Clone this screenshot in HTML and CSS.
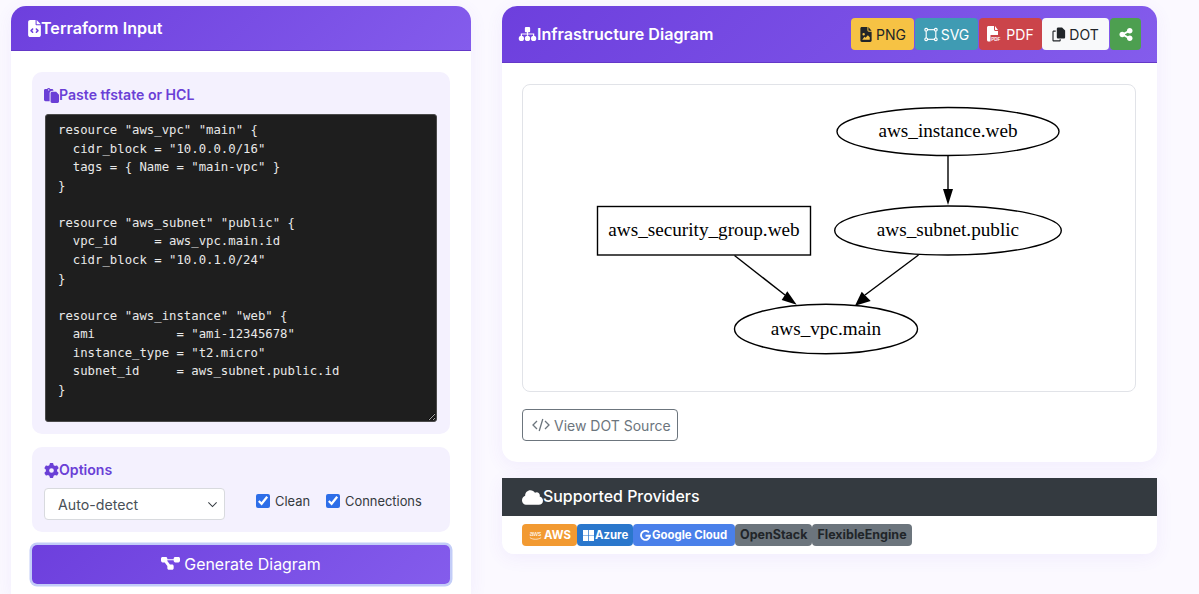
FILE: index.html
```html
<!DOCTYPE html>
<html lang="en">
<head>
<meta charset="utf-8">
<title>Terraform Diagram</title>
<link rel="stylesheet" href="styles.css">
</head>
<body>
<main class="layout">
  <section class="card input-card">
    <header class="card-head input-head">
      <svg class="ico ico-head" viewBox="0 0 384 512"><path d="M64 0C28.7 0 0 28.7 0 64V448c0 35.3 28.7 64 64 64H320c35.3 0 64-28.7 64-64V160H256c-17.7 0-32-14.3-32-32V0H64zM256 0V128H384L256 0zM153 289l-31 31 31 31c9.4 9.4 9.4 24.6 0 33.9s-24.6 9.4-33.9 0L71 337c-9.4-9.4-9.4-24.6 0-33.9l48-48c9.4-9.4 24.6-9.4 33.9 0s9.4 24.6 0 33.9zM265 255l48 48c9.4 9.4 9.4 24.6 0 33.9l-48 48c-9.4 9.4-24.6 9.4-33.9 0s-9.4-24.6 0-33.9l31-31-31-31c-9.4-9.4-9.4-24.6 0-33.9s24.6-9.4 33.9 0z"/></svg>
      <h2 class="card-title">Terraform Input</h2>
    </header>
    <div class="input-body">
      <div class="panel paste-panel">
        <label class="panel-label" for="src">
          <svg class="ico" viewBox="0 0 512 512"><path d="M160 0c-23.7 0-44.4 12.9-55.4 32H48C21.5 32 0 53.5 0 80V400c0 26.5 21.5 48 48 48H192V176c0-44.2 35.8-80 80-80h48V80c0-26.5-21.5-48-48-48H215.4C204.4 12.9 183.7 0 160 0zM272 128c-26.5 0-48 21.5-48 48V448v16c0 26.5 21.5 48 48 48H464c26.5 0 48-21.5 48-48V243.9c0-12.7-5.1-24.9-14.1-33.9l-66-66c-9-9-21.2-14.1-33.9-14.1H272zM160 40a24 24 0 1 1 0 48 24 24 0 1 1 0-48z"/></svg>
          Paste tfstate or HCL
        </label>
        <textarea id="src" class="code" spellcheck="false">resource "aws_vpc" "main" {
  cidr_block = "10.0.0.0/16"
  tags = { Name = "main-vpc" }
}

resource "aws_subnet" "public" {
  vpc_id     = aws_vpc.main.id
  cidr_block = "10.0.1.0/24"
}

resource "aws_instance" "web" {
  ami           = "ami-12345678"
  instance_type = "t2.micro"
  subnet_id     = aws_subnet.public.id
}

resource "aws_security_group" "web" {
  vpc_id = aws_vpc.main.id
}</textarea>
      </div>
      <div class="panel options-panel">
        <div class="panel-label">
          <svg class="ico" viewBox="0 0 512 512"><path d="M495.9 166.6c3.2 8.7 .5 18.4-6.4 24.6l-43.3 39.4c1.1 8.3 1.7 16.8 1.7 25.4s-.6 17.1-1.7 25.4l43.3 39.4c6.9 6.2 9.6 15.9 6.4 24.6c-4.4 11.9-9.7 23.3-15.8 34.3l-4.7 8.1c-6.6 11-14 21.4-22.1 31.2c-5.9 7.2-15.7 9.6-24.5 6.8l-55.7-17.7c-13.4 10.3-28.2 18.9-44 25.4l-12.5 57.1c-2 9.1-9 16.3-18.2 17.8c-13.8 2.3-28 3.5-42.5 3.5s-28.7-1.2-42.5-3.5c-9.2-1.5-16.2-8.7-18.2-17.8l-12.5-57.1c-15.8-6.5-30.6-15.1-44-25.4L83.1 425.9c-8.8 2.8-18.6 .3-24.5-6.8c-8.1-9.8-15.5-20.2-22.1-31.2l-4.7-8.1c-6.1-11-11.4-22.4-15.8-34.3c-3.2-8.7-.5-18.4 6.4-24.6l43.3-39.4C64.6 273.1 64 264.6 64 256s.6-17.1 1.7-25.4L22.4 191.2c-6.9-6.2-9.6-15.9-6.4-24.6c4.4-11.9 9.7-23.3 15.8-34.3l4.7-8.1c6.6-11 14-21.4 22.1-31.2c5.9-7.2 15.7-9.6 24.5-6.8l55.7 17.7c13.4-10.3 28.2-18.9 44-25.4l12.5-57.1c2-9.1 9-16.3 18.2-17.8C227.3 1.2 241.5 0 256 0s28.7 1.2 42.5 3.5c9.2 1.5 16.2 8.7 18.2 17.8l12.5 57.1c15.8 6.5 30.6 15.1 44 25.4l55.7-17.7c8.8-2.8 18.6-.3 24.5 6.8c8.1 9.8 15.5 20.2 22.1 31.2l4.7 8.1c6.1 11 11.4 22.4 15.8 34.3zM256 336a80 80 0 1 0 0-160 80 80 0 1 0 0 160z"/></svg>
          Options
        </div>
        <div class="options-row">
          <select class="select"><option>Auto-detect</option></select>
          <div class="checks">
            <label class="check"><input type="checkbox" checked>Clean</label>
            <label class="check"><input type="checkbox" checked>Connections</label>
          </div>
        </div>
      </div>
      <button class="generate" type="button">
        <svg class="ico ico-gen" viewBox="0 0 576 512"><path d="M0 80C0 53.5 21.5 32 48 32h96c26.5 0 48 21.5 48 48V96H384V80c0-26.5 21.5-48 48-48h96c26.5 0 48 21.5 48 48v64c0 26.5-21.5 48-48 48H432c-26.5 0-48-21.5-48-48V128H192v16c0 1.7-.1 3.4-.3 5L272 256h64c26.5 0 48 21.5 48 48v64c0 26.5-21.5 48-48 48H240c-26.5 0-48-21.5-48-48V304c0-1.7 .1-3.4 .3-5L112 192H48c-26.5 0-48-21.5-48-48V80z"/></svg>
        Generate Diagram
      </button>
    </div>
  </section>

  <div class="right-col">
    <section class="card diagram-card">
      <header class="card-head diagram-head">
        <div class="title-wrap">
          <svg class="ico ico-head" viewBox="0 0 20 16"><circle cx="3" cy="13" r="3"/><circle cx="10" cy="13" r="3"/><circle cx="17" cy="13" r="3"/><rect x="7" y="0" width="6" height="6" rx="1.2"/><path d="M10 5v5M3 11V8h14v3" fill="none" stroke="currentColor" stroke-width="1.4"/></svg>
          <h2 class="card-title">Infrastructure Diagram</h2>
        </div>
        <div class="btn-group">
          <button class="tb tb-png" type="button">
            <svg class="ico ico-tb" viewBox="0 0 12 16"><path fill-rule="evenodd" d="M1.5 0h6v3.500c0 .8.7 1.500 1.500 1.500h3v9.500c0 .8-.7 1.500-1.500 1.500h-9C.7 16 0 15.300 0 14.500V1.500C0 .7.700 0 1.500 0zM3.500 6.500a1.300 1.300 0 1 0 0 2.600 1.300 1.300 0 0 0 0-2.600zM2 13.500h8v-2.500L8 8.800 5.500 11.500 4.300 10.300z"/><path d="M8.500 0L12 4H9c-.3 0-.5-.2-.5-.5z"/></svg>
            PNG
          </button>
          <button class="tb tb-svg" type="button">
            <svg class="ico ico-tb ico-line" viewBox="0 0 16 16" stroke-width="1.300"><rect x="2.500" y="2.500" width="11" height="11"/><rect x="1" y="1" width="3" height="3" rx="1.200" fill="#3f9bb3"/><rect x="12" y="1" width="3" height="3" rx="1.200" fill="#3f9bb3"/><rect x="1" y="12" width="3" height="3" rx="1.200" fill="#3f9bb3"/><rect x="12" y="12" width="3" height="3" rx="1.200" fill="#3f9bb3"/></svg>
            SVG
          </button>
          <button class="tb tb-pdf" type="button">
            <svg class="ico ico-tb ico-pdf" viewBox="0 0 16 16"><path d="M1.500 0H7v3.500C7 4.300 7.700 5 8.500 5H11v4H3.500v6.500h-2C.7 15.500 0 14.800 0 14V1.500C0 .7.700 0 1.500 0zM8 0l3 4H8.500C8.200 4 8 3.800 8 3.500z"/><text class="pdf-mark" x="4.200" y="15.300">PDF</text></svg>
            PDF
          </button>
          <button class="tb tb-dot" type="button">
            <svg class="ico ico-tb" viewBox="0 0 16 16"><path d="M7 0h4.500L15 3.500V11c0 .8-.7 1.500-1.500 1.500H7c-.8 0-1.500-.7-1.500-1.500V1.500C5.500.7 6.200 0 7 0z"/><path d="M4.200 3.500H2C1.200 3.500.5 4.200.5 5v9.500c0 .8.700 1.500 1.500 1.500h6.500c.8 0 1.500-.7 1.500-1.500V13.500H8.700v1.200H1.800V4.800h2.400z"/></svg>
            DOT
          </button>
          <button class="tb tb-share" type="button" aria-label="Share">
            <svg class="ico ico-tb" viewBox="0 0 448 512"><path d="M352 224c53 0 96-43 96-96s-43-96-96-96s-96 43-96 96c0 4 .2 8 .7 11.900l-94.100 47C145.400 170.200 121.900 160 96 160c-53 0-96 43-96 96s43 96 96 96c25.900 0 49.400-10.200 66.600-26.900l94.100 47c-.5 3.900-.7 7.800-.7 11.900c0 53 43 96 96 96s96-43 96-96s-43-96-96-96c-25.900 0-49.400 10.200-66.600 26.900l-94.100-47c.5-3.900 .7-7.800 .7-11.900s-.2-8-.7-11.900l94.100-47C302.600 213.800 326.100 224 352 224z"/></svg>
          </button>
        </div>
      </header>
      <div class="diagram-body">
        <div class="canvas">
          <svg class="graph" viewBox="0 0 612 306" width="612" height="306">
            <g class="graph-shapes">
              <ellipse cx="425" cy="46.500" rx="111" ry="24"/>
              <ellipse cx="425" cy="145.500" rx="113.300" ry="24.500"/>
              <rect x="74.500" y="121.500" width="213" height="48.500"/>
              <ellipse cx="303" cy="244" rx="91.500" ry="24.700"/>
              <path d="M425 71V105"/>
              <path d="M211.500 170.500L262 210"/>
              <path d="M395.500 170L342 210"/>
            </g>
            <g class="graph-heads">
              <path d="M420 104h10l-5 16z"/>
              <path d="M258.700 215l5.600-8.700 9.400 13.400z"/>
              <path d="M338.700 206.700l9 9.300-15.700 4.700z"/>
            </g>
            <g class="graph-labels">
              <text x="425" y="52">aws_instance.web</text>
              <text x="425" y="151">aws_subnet.public</text>
              <text x="181" y="151">aws_security_group.web</text>
              <text x="303" y="249.500">aws_vpc.main</text>
            </g>
          </svg>
        </div>
        <button class="source-btn" type="button">
          <svg class="ico ico-code ico-line" viewBox="0 0 18 14" stroke-width="1.300"><path d="M5 3L1 7l4 4M13 3l4 4-4 4M10.800 1L7.200 13"/></svg>
          View DOT Source
        </button>
      </div>
    </section>

    <section class="card providers-card">
      <header class="providers-head">
        <svg class="ico ico-cloud" viewBox="0 0 640 512"><path d="M0 336c0 79.500 64.500 144 144 144H512c70.700 0 128-57.300 128-128c0-61.900-44-113.600-102.400-125.400c4.100-10.700 6.400-22.400 6.400-34.600c0-53-43-96-96-96c-19.700 0-38.100 6-53.300 16.200C367 64.200 315.300 32 256 32C167.600 32 96 103.600 96 192c0 2.700 .1 5.400 .2 8.100C40.200 219.800 0 273.200 0 336z"/></svg>
        <h3 class="providers-title">Supported Providers</h3>
      </header>
      <div class="badges">
        <span class="badge b-aws">
          <svg class="ico b-ico" viewBox="0 0 16 11"><text class="aws-mark" x="8" y="6">aws</text><path d="M2 7.800c3.500 2.300 8.500 2.300 12 0" fill="none" stroke="currentColor" stroke-width=".7"/></svg>
          AWS
        </span>
        <span class="badge b-azure">
          <svg class="ico b-ico-sq" viewBox="0 0 12 12"><path d="M0 0h5.600v5.600H0zM6.400 0H12v5.600H6.400zM0 6.400h5.600V12H0zM6.400 6.400H12V12H6.400z"/></svg>
          Azure
        </span>
        <span class="badge b-google">
          <svg class="ico b-ico-sq ico-line" viewBox="0 0 12 12" stroke-width="2"><path d="M9.700 2.600A4.900 4.900 0 1 0 10.900 6.300H6"/></svg>
          Google Cloud
        </span>
        <span class="badge b-gray">OpenStack</span>
        <span class="badge b-gray">FlexibleEngine</span>
      </div>
    </section>
  </div>
</main>
</body>
</html>
```

FILE: styles.css
```css
* { box-sizing: border-box; }

html, body {
  margin: 0;
  height: 594px;
  overflow: hidden;
}

body {
  background: #fbf9ff;
  color: #212529;
  font-family: Inter, "Liberation Sans", sans-serif;
  font-size: 14px;
}

.layout {
  display: flex;
  align-items: flex-start;
  gap: 31px;
  padding: 6px 0 0 11px;
}

.ico {
  display: block;
  flex: none;
  fill: currentColor;
}

.ico-line {
  fill: none;
  stroke: currentColor;
}

.card {
  background: #fff;
  border-radius: 15px;
  box-shadow: 0 4px 18px rgba(111, 66, 224, 0.07);
}

.card-head {
  display: flex;
  align-items: center;
  color: #fff;
  background: linear-gradient(135deg, #6d3fdd 0%, #845cec 100%);
  border-bottom: 1px solid #6438c8;
  border-radius: 15px 15px 0 0;
}

.card-title {
  margin: 0;
  font-size: 16.100px;
  font-weight: 600;
  line-height: 20px;
}

.ico-head {
  width: 13px;
  height: 17px;
}

/* left column */
.input-card {
  width: 460px;
  flex: none;
  height: 588px;
  border-radius: 15px 15px 0 0;
}

.input-head {
  height: 45px;
  padding: 0 17px;
  gap: 0;
}

.input-body {
  display: flex;
  flex-direction: column;
  gap: 13px;
  padding: 21px 21px 0;
}

.panel {
  background: #f4f1fe;
  border-radius: 10px;
  padding: 13px 13px 13px 12px;
}

.panel-label {
  display: flex;
  align-items: center;
  color: #6a3fd6;
  font-size: 14.100px;
  font-weight: 600;
  line-height: 20px;
}

.panel-label .ico {
  width: 15px;
  height: 15px;
}

.paste-panel {
  height: 362px;
}

.code {
  display: block;
  width: 392px;
  height: 307.500px;
  margin: 9px 0 0 1px;
  padding: 6px 12px;
  background: #1e1e1e;
  border: 1px solid #4a4a4a;
  border-radius: 3px;
  color: #e9e9e9;
  font-family: "DejaVu Sans Mono", monospace;
  font-size: 12.300px;
  line-height: 18.570px;
  white-space: pre;
  overflow: hidden;
  scrollbar-width: none;
  outline: none;
}

.options-panel {
  height: 85px;
}

.options-row {
  display: flex;
  margin-top: 8px;
}

.select {
  appearance: none;
  width: 181px;
  height: 32px;
  padding: 0 13px;
  background: #fff url("data:image/svg+xml,%3csvg xmlns='http://www.w3.org/2000/svg' viewBox='0 0 16 16'%3e%3cpath fill='none' stroke='%23343a40' stroke-width='1.500' d='M2 5l6 6 6-6'/%3e%3c/svg%3e") no-repeat right 6px center / 11px 11px;
  border: 1px solid #d8dade;
  border-radius: 4px;
  color: #495057;
  font: 400 14.200px Inter, sans-serif;
}

.checks {
  display: flex;
  gap: 16px;
  margin: -3px 0 0 31px;
}

.check {
  display: flex;
  align-items: center;
  gap: 5px;
  height: 32px;
  font-size: 12.900px;
  color: #343a40;
}

.check input {
  width: 14px;
  height: 14px;
  margin: 0;
  accent-color: #2d6ee8;
}

.generate {
  display: flex;
  align-items: center;
  justify-content: center;
  gap: 4px;
  width: 418px;
  height: 39px;
  padding: 0;
  color: #fff;
  background: linear-gradient(135deg, #6d3fdd 0%, #845cec 100%);
  border: 0;
  border-radius: 5px;
  box-shadow: 0 0 0 2.500px #c3cdf8;
  font: 400 15.900px Inter, sans-serif;
}

.ico-gen {
  width: 19px;
  height: 17px;
}

/* right column */
.right-col {
  width: 655px;
  flex: none;
  display: flex;
  flex-direction: column;
  gap: 16px;
}

.diagram-card {
  height: 456px;
}

.diagram-head {
  justify-content: space-between;
  height: 57px;
  padding: 0 16px;
}

.title-wrap {
  display: flex;
  align-items: center;
}

.title-wrap .ico-head {
  width: 19px;
  height: 14px;
}

.btn-group {
  display: flex;
}

.tb {
  display: flex;
  align-items: center;
  justify-content: center;
  gap: 3px;
  height: 32px;
  padding: 0;
  border: 0;
  border-radius: 4px;
  font: 400 14px Inter, sans-serif;
}

.tb-png { width: 63px; background: #f6c244; color: #212529; }
.tb-svg { width: 63px; margin-left: 1px; background: #3f9bb3; color: #fff; }
.tb-pdf { width: 63px; margin-left: 1px; background: #cb444a; color: #fff; }
.tb-dot { width: 67px; background: #f8f9fa; color: #212529; }
.tb-share { width: 31px; margin-left: 1px; background: #4d9f50; color: #fff; }

.ico-tb {
  width: 14px;
  height: 15px;
}

.ico-pdf {
  width: 16px;
  height: 16px;
}

.pdf-mark {
  fill: currentColor;
  font: 700 4.500px "Liberation Sans", sans-serif;
}

.diagram-body {
  padding: 21px 20px 0;
}

.canvas {
  width: 614px;
  height: 308px;
  background: #fff;
  border: 1px solid #e1e3e8;
  border-radius: 8px;
}

.graph {
  display: block;
}

.graph-shapes {
  fill: none;
  stroke: #000;
  stroke-width: 1.400;
}

.graph-heads {
  fill: #000;
}

.graph-labels {
  fill: #000;
  font-family: "Liberation Serif", serif;
  font-size: 19.200px;
  text-anchor: middle;
}

.source-btn {
  display: flex;
  align-items: center;
  gap: 4px;
  width: 156px;
  height: 32px;
  margin-top: 17px;
  padding: 0 0 0 9px;
  background: #fff;
  border: 1px solid #6c757d;
  border-radius: 4px;
  color: #6c757d;
  font: 400 14px Inter, sans-serif;
}

.ico-code {
  width: 18px;
  height: 14px;
}

.providers-card {
  height: 76px;
  border-radius: 0 0 12px 12px;
}

.providers-head {
  display: flex;
  align-items: center;
  height: 38px;
  padding: 0 20px;
  background: #343a40;
  color: #fff;
}

.providers-title {
  margin: 0;
  font-size: 15.900px;
  font-weight: 500;
  line-height: 20px;
}

.ico-cloud {
  width: 21px;
  height: 17px;
}

.badges {
  display: flex;
  padding: 8px 20px 0;
}

.badge {
  display: flex;
  align-items: center;
  gap: 1px;
  height: 22px;
  padding: 0 7px;
  border-radius: 4px;
  color: #fff;
  font-size: 11.400px;
  font-weight: 700;
}

.b-aws { background: #f29a32; width: 55px; padding-left: 6px; }
.b-azure { background: #2a77cc; width: 56px; padding-left: 6px; }
.b-google { background: #4a80ea; width: 102px; }

.b-gray {
  align-items: flex-start;
  padding: 3px 5px 0;
  background: #6c757d;
  color: #212529;
  font-size: 12.500px;
  line-height: 15px;
}

.b-ico {
  width: 15px;
  height: 11px;
}

.b-ico-sq {
  width: 11px;
  height: 11px;
}

.aws-mark {
  fill: currentColor;
  font: 400 7px "Liberation Sans", sans-serif;
  text-anchor: middle;
}
```
